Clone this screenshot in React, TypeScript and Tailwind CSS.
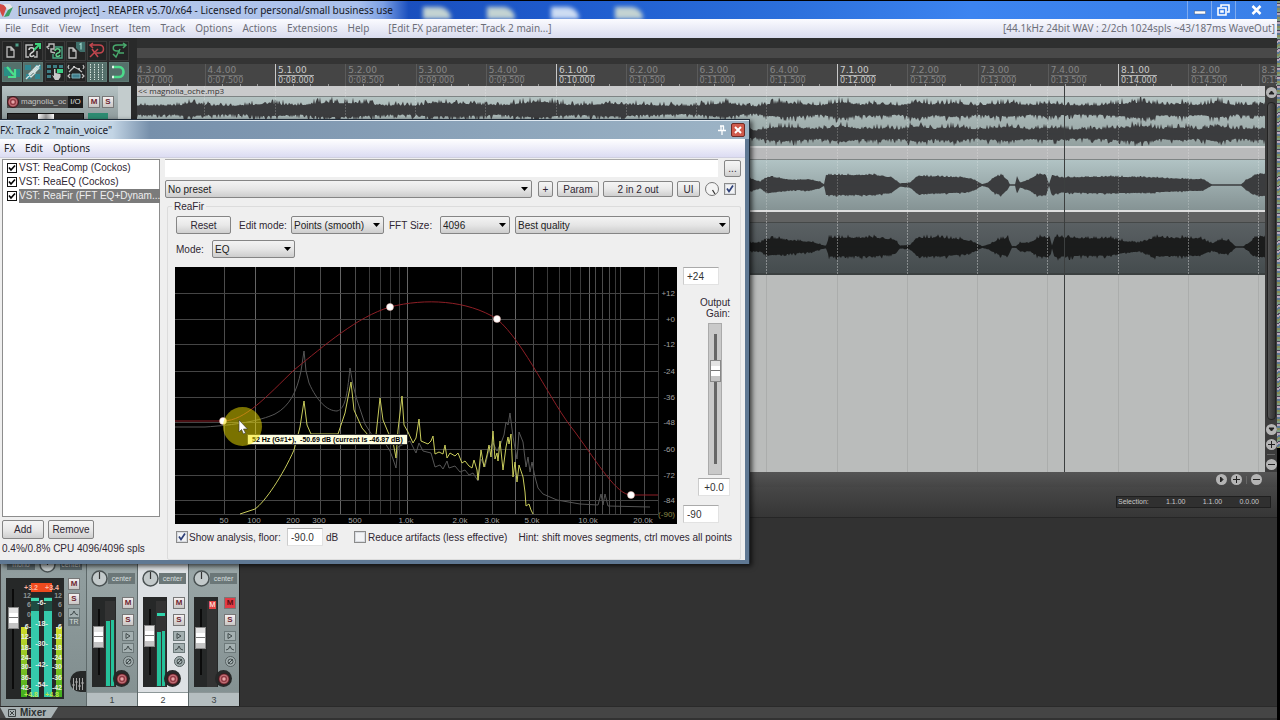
import type { ReactNode } from 'react';

const MENUS = ['File', 'Edit', 'View', 'Insert', 'Item', 'Track', 'Options', 'Actions', 'Extensions', 'Help'];

const BARS = [
  { bar: 5, times: ['0:08.000', '0:08.500', '0:09.000', '0:09.500'] },
  { bar: 6, times: ['0:10.000', '0:10.500', '0:11.000', '0:11.500'] },
  { bar: 7, times: ['0:12.000', '0:12.500', '0:13.000', '0:13.500'] },
  { bar: 8, times: ['0:14.000', '0:14.500', '0:15.000', '0:15.500'] },
];

const PLUGINS = ['VST: ReaComp (Cockos)', 'VST: ReaEQ (Cockos)', 'VST: ReaFir (FFT EQ+Dynam...'];

type Point = [number, number];

// small deterministic noise so the waveforms look the same on every render
function noise(n: number) {
  const v = Math.sin(n * 127.1 + 311.7) * 43758.5453;
  return v - Math.floor(v);
}

function envelopeAt(env: Point[], x: number) {
  for (let i = 1; i < env.length; i++) {
    if (x <= env[i][0]) {
      const [x0, y0] = env[i - 1];
      const [x1, y1] = env[i];
      return y0 + ((y1 - y0) * (x - x0)) / (x1 - x0);
    }
  }
  return env[env.length - 1][1];
}

function wavePath(env: Point[], mid: number, rough: number, seed: number) {
  const top: string[] = [];
  const bottom: string[] = [];
  for (let x = 137; x <= 1265; x += 1) {
    const e = envelopeAt(env, x);
    const up = e * (1 - rough + rough * noise(x + seed) ** 3);
    const down = e * (1 - rough + rough * noise(x * 3 + seed) ** 3);
    top.push(`${x},${(mid - up).toFixed(1)}`);
    bottom.unshift(`${x},${(mid + down).toFixed(1)}`);
  }
  return `M${top.join(' L')} L${bottom.join(' L')} Z`;
}

const MUSIC: Point[] = [
  [137, 9], [180, 9], [188, 13], [210, 9], [240, 8], [265, 12], [300, 9], [325, 14], [352, 13], [385, 9],
  [420, 9], [430, 13], [465, 12], [500, 9], [538, 15], [575, 9], [612, 12], [650, 9], [690, 8], [726, 13],
  [745, 8], [757, 7], [770, 12], [788, 13], [820, 9], [842, 15], [860, 10], [880, 11], [900, 9], [917, 15],
  [935, 10], [953, 13], [975, 9], [1010, 13], [1030, 9], [1045, 12], [1070, 9], [1100, 9], [1115, 11],
  [1143, 15], [1160, 10], [1182, 12], [1200, 9], [1218, 15], [1235, 9], [1265, 11],
];

const VOICE: Point[] = [
  [137, 6], [750, 8], [760, 4], [768, 10], [785, 7], [797, 6], [808, 7], [820, 4], [824, 1], [826, 12],
  [875, 12], [892, 9], [900, 2], [910, 3], [918, 11], [940, 10], [965, 9], [975, 6], [982, 1], [988, 3],
  [995, 10], [1002, 12], [1008, 5], [1010, 0.5], [1015, 0.5], [1017, 10], [1020, 3], [1030, 7], [1038, 13],
  [1046, 12], [1049, 1], [1052, 12], [1060, 9], [1110, 10], [1150, 9], [1190, 7], [1203, 7], [1212, 0.5],
  [1241, 0.5], [1246, 6], [1251, 9], [1258, 13], [1265, 13],
];

const VOICE_WET: Point[] = [
  [137, 6], [750, 6], [760, 6], [768, 12], [785, 10], [800, 8], [812, 7], [824, 2], [826, 2], [829, 13],
  [875, 13], [895, 10], [900, 2], [910, 3], [918, 13], [940, 13], [965, 10], [975, 6], [982, 1], [990, 4],
  [998, 10], [1008, 13], [1012, 1], [1016, 1], [1020, 6], [1030, 6], [1040, 14], [1050, 12], [1052, 2], [1055, 14],
  [1085, 12], [1110, 12], [1125, 8], [1140, 6], [1155, 13], [1200, 12], [1212, 5], [1222, 10], [1230, 8],
  [1236, 0.5], [1243, 0.5], [1250, 7], [1256, 13], [1265, 14],
];

function Wave({ env, mids, rough, height, dark }: { env: Point[]; mids: number[]; rough: number; height: number; dark?: boolean }) {
  return (
    <svg className="block h-full w-full" viewBox={`137 0 1128 ${height}`} preserveAspectRatio="none">
      {mids.map((mid, i) => (
        <g key={mid}>
          <path d={wavePath(env, mid, rough, i * 50)} fill={dark ? '#1b1c1c' : '#3b3c3e'} />
          <path d={`M137 ${mid}H1265`} stroke={dark ? '#1b1c1c' : '#3b3c3e'} strokeWidth="1" />
        </g>
      ))}
    </svg>
  );
}

/* ---------- toolbar ---------- */

function Tool({ label, on, children }: { label: string; on?: boolean; children: ReactNode }) {
  return (
    <button
      aria-label={label}
      className={`flex h-5 w-5 items-center justify-center border ${on ? 'border-[#5d7a74] bg-[#55706b]' : 'border-[#3a3a3a] bg-[#232424]'}`}
    >
      <svg width="18" height="18" viewBox="0 0 18 18" fill="none">
        {children}
      </svg>
    </button>
  );
}

function Toolbar() {
  return (
    <div className="grid w-[130px] grid-cols-6 gap-y-px pt-[3px] pl-[2px]">
      <Tool label="New project">
        <path d="M4 5h4l3 3v7H4z M8 5v3h3" stroke="#bdbdbd" strokeWidth="1.3" />
        <path d="M14 1v4M12 3h4M12.7 1.7l2.6 2.6M15.3 1.7l-2.6 2.6" stroke="#4f9f8a" />
      </Tool>
      <Tool label="Open project">
        <path d="M9 3H2v12h3M13 9v6h-3" stroke="#bdbdbd" strokeWidth="1.4" />
        <path d="M5 8c0-3 5-3 5 0s-4 2-4 5c0 2 3 2 4 0" stroke="#d0d0d0" strokeWidth="1.6" />
        <path d="M10 8l5-5M11 2h5v5" stroke="#3fd07c" strokeWidth="2" />
      </Tool>
      <Tool label="Save project">
        <path d="M9 5h7v11H7v-4" stroke="#4aa584" strokeWidth="1.4" />
        <path d="M9 9c0-3 5-3 5 0s-4 1-4 4c0 2 3 2 4 0" stroke="#5fd08b" strokeWidth="1.5" />
        <path d="M3 7L1 5l2-1V2h5v5H5v3l4 1" stroke="#bdbdbd" strokeWidth="1.4" />
      </Tool>
      <Tool label="Project settings">
        <path d="M2 6h4l3 3v7H2z M6 6v3h3" stroke="#bdbdbd" strokeWidth="1.3" />
        <path d="M9 0h9v10H13L9 6z" fill="#3f6f6b" />
        <path d="M12.5 2.5l1.5-1v6" stroke="#9fd6cb" strokeWidth="1.2" />
      </Tool>
      <Tool label="Undo">
        <path d="M2 3h9c6 0 6 8 0 8H8M5 1L2 3l3 3" stroke="#c2464e" strokeWidth="1.5" />
        <path d="M4 7l6 8M10 7l-8 8" stroke="#c2464e" strokeWidth="1.5" />
      </Tool>
      <Tool label="Redo">
        <path d="M16 3H7c-5 0-5 6 0 6h3M13 1l3 2-3 3" stroke="#48a96c" strokeWidth="1.5" />
        <path d="M10 7l-4 8-3-3M9 11h5" stroke="#48a96c" strokeWidth="1.5" />
      </Tool>
      <Tool label="Auto crossfade" on>
        <path d="M1 4h7v9H1z M11 6h6v8h-6z" fill="#2a8f86" />
        <path d="M4 4l7 8M12 6v8H5" stroke="#4be08c" strokeWidth="2.2" />
      </Tool>
      <Tool label="Item grouping" on>
        <path d="M1 2h6v5H1z M11 2h6v5h-6z M2 11h5v5H2z M11 11h5v5h-5z" fill="#2f8792" />
        <path d="M2 16L16 2M5 11l3-3 3 2-4 4zM9 7l4-4 2 2-4 4z" stroke="#d8e4e4" strokeWidth="1.3" />
      </Tool>
      <Tool label="Ripple editing">
        <path d="M1 2h4v3H1z M7 2h4v3H7z M13 2h4v3h-4z M1 7h4v3H1z M1 12h4v3H1z" fill="#3f7f86" />
        <path d="M11 6h6v4h-6z" fill="#3ccf84" />
        <path d="M8 6h1.5v4l5 1v3l-2 3H9l-3-5 2 1z" fill="#c9c9c9" />
      </Tool>
      <Tool label="Move envelopes with items">
        <path d="M2 9l5-5 4 2 4 3" stroke="#c4c4c4" strokeWidth="1.2" />
        <path d="M6 3h2v2H6z M11 5h2v2h-2z" fill="#c4c4c4" />
        <path d="M5 11h8v4H5z" fill="#3f7f8e" stroke="#79aab2" />
        <path d="M3 11l-2 2 2 2M15 11l2 2-2 2M2 2L1 4l1 2M16 2l1 2-1 2" stroke="#c4c4c4" strokeWidth="1.2" />
      </Tool>
      <Tool label="Grid" on>
        <path d="M2.5 1v16M6.5 1v16M10.5 1v16M14.5 1v16" stroke="#d5e3dd" strokeDasharray="1.5 1" />
      </Tool>
      <Tool label="Snap" on>
        <path d="M3 4h6c6 0 6 10 0 10H3" stroke="#4cdc8b" strokeWidth="2.6" />
        <path d="M3 2.7v2.6M3 12.7v2.6" stroke="#e2f6ea" strokeWidth="2" />
      </Tool>
    </div>
  );
}

/* ---------- arrange view ---------- */

function Beat({ pos, time, strong }: { pos: string; time: string; strong?: boolean }) {
  return (
    <div
      className={`relative h-[22px] border-l pl-[2px] font-['DejaVu_Sans'] whitespace-nowrap ${
        strong ? 'border-[#c8c8c8] text-[#c9c9c9]' : 'border-[#5a5a5a] text-[#858585]'
      }`}
    >
      <div className="pt-px text-[9px] leading-[10px]">{pos}</div>
      <div className={`w-fit border-t text-[8px] leading-[9px] ${strong ? 'border-[#b0b0b0]' : 'border-[#6c6c6c]'}`}>{time}</div>
      <div className="absolute bottom-0 left-0 flex h-[2px] w-full justify-evenly">
        <i className="w-px bg-[#999]" />
        <i className="w-px bg-[#999]" />
        <i className="w-px bg-[#999]" />
      </div>
    </div>
  );
}

function Ruler() {
  return (
    <div className="-ml-[3px] flex h-[22px] bg-[#454545]">
      <div className="grid w-[141px] shrink-0 grid-cols-2">
        <Beat pos="4.3.00" time="0:07.000" />
        <Beat pos="4.4.00" time="0:07.500" />
      </div>
      {BARS.map(({ bar, times }) => (
        <div key={bar} className="grid w-[281px] shrink-0 grid-cols-4">
          {times.map((time, i) => (
            <Beat key={time} pos={`${bar}.${i + 1}.00`} time={time} strong={i === 0} />
          ))}
        </div>
      ))}
    </div>
  );
}

function RoundButton({ label, d }: { label: string; d: string }) {
  return (
    <button aria-label={label} className="flex h-[11px] w-[11px] shrink-0 items-center justify-center rounded-full bg-[#b5b5b5]">
      <svg width="7" height="7" viewBox="0 0 7 7">
        <path d={d} stroke="#222" fill="#222" />
      </svg>
    </button>
  );
}

const PLUS = 'M0 3.5H7M3.5 0V7';
const MINUS = 'M0 3.5H7';

function Arrange() {
  return (
    <div className="relative flex min-w-0 flex-1 flex-col overflow-hidden">
      <div className="h-[10px] bg-[#2e2f2f]" />
      <div className="h-[10px] bg-[#494949]" />
      <div className="h-[6px] bg-[#343434]" />
      <Ruler />
      <div className="flex min-h-0 flex-1">
        <div className="relative flex-1 overflow-hidden bg-[#babcbb]">
          <div className="h-[11px] border-b border-[#7e8484] bg-[#c9cacb] pl-px font-['Open_Sans'] text-[8px] leading-[10px] text-[#333]">
            &lt;&lt; magnolia_oche.mp3
          </div>
          <div className="h-[49px] bg-linear-to-b from-[#b4c3c2] to-[#93a1a0]">
            <Wave env={MUSIC} mids={[13, 37]} rough={0.5} height={49} />
          </div>
          <div className="h-[2px] bg-[#d3d5d5]" />
          <div className="h-3 border-b border-[#7e8484] bg-[#b9babb]" />
          <div className="h-[50px] bg-linear-to-b from-[#b1c3c4] to-[#859394]">
            <Wave env={VOICE} mids={[25]} rough={0.18} height={50} />
          </div>
          <div className="h-[2px] bg-[#dedede]" />
          <div className="h-[11px] border-b border-[#454848] bg-[#616262]" />
          <div className="h-[52px] border-b-2 border-[#3b4040] bg-linear-to-b from-[#5a6063] to-[#454c4e]">
            <Wave env={VOICE_WET} mids={[24]} rough={0.3} height={50} dark />
          </div>
          {/* beat grid and edit cursor run over all items */}
          <svg className="absolute inset-0 h-full w-full" viewBox="137 86 1128 386" preserveAspectRatio="none">
            {Array.from({ length: 17 }, (_, i) => Math.round(134 + i * 70.25) + 0.5).map((x) => (
              <g key={x}>
                <path d={`M${x} 86V212`} stroke="#ffffff" strokeOpacity="0.2" strokeDasharray="2 1" />
                <path d={`M${x} 212V274`} stroke="#ffffff" strokeOpacity="0.35" strokeDasharray="2 1" />
                <path d={`M${x} 275V472`} stroke="#abadac" />
              </g>
            ))}
            <path d="M1064.5 86V472" stroke="#3c3f3f" />
          </svg>
        </div>
        <div className="flex w-3 flex-col items-center gap-1 bg-[#3c3c3c] pt-px">
          <RoundButton label="Scroll up" d="M1 5L3.5 2L6 5Z" />
          <div className="w-[9px] flex-1 rounded border border-[#222] bg-linear-to-r from-[#555] to-[#333]" />
          <RoundButton label="Scroll down" d="M1 2L3.5 5L6 2Z" />
          <RoundButton label="Zoom in vertically" d={PLUS} />
          <i className="h-px w-2 bg-[#666]" />
          <div className="pb-[2px]">
            <RoundButton label="Zoom out vertically" d={MINUS} />
          </div>
        </div>
      </div>
    </div>
  );
}

function SmallButton({ children, red, label }: { children: ReactNode; red?: boolean; label?: string }) {
  return (
    <button
      aria-label={label}
      className={`flex h-3 w-3 items-center justify-center border border-[#777] text-[8px] leading-none font-bold ${
        red ? 'bg-[#e33b45] text-[#5c0d12]' : 'bg-linear-to-b from-[#f4f0f0] to-[#c9c6c4] text-[#6d2531]'
      }`}
    >
      {children}
    </button>
  );
}

function RecordDot() {
  return (
    <svg className="shrink-0" width="12" height="12" viewBox="0 0 14 14">
      <circle cx="7" cy="7" r="6.5" fill="#913a44" stroke="#30181b" />
      <circle cx="7" cy="7" r="4.5" fill="none" stroke="#cf8388" />
      <circle cx="7" cy="7" r="2" fill="#e6a5a8" />
    </svg>
  );
}

function TrackPanel() {
  return (
    <div className="mt-1 ml-[2px] flex h-12 w-[129px] bg-[#93a0a1]">
      <div className="flex w-[116px] flex-col gap-[5px] bg-linear-to-b from-[#b5c2c3] to-[#7d8a8b] pt-[10px] pl-[5px]">
        <div className="flex items-center">
          <div className="flex h-3 w-[61px] items-center gap-[2px] bg-[#4a4a4a] text-[8px] text-[#c4c4c4]">
            <RecordDot />
            magnolia_oc
          </div>
          <button className="mr-[5px] h-3 w-[15px] bg-[#1c1c1c] text-[8px] leading-3 text-[#ddd]">I/O</button>
          <SmallButton>M</SmallButton>
          <div className="w-[2px]" />
          <SmallButton>S</SmallButton>
        </div>
        <div className="flex h-3 items-start">
          <div className="mr-1 flex h-full w-[77px] justify-center border border-[#111] bg-[#292929]">
            <div className="w-4 bg-linear-to-r from-white via-[#999] to-white" />
          </div>
          <div className="h-full w-5 bg-[#2d8b72]" />
        </div>
      </div>
      <div className="flex-1 bg-[#c3cccd]" />
    </div>
  );
}

/* ---------- FX window ---------- */

function Push({ children, className }: { children: ReactNode; className: string }) {
  return (
    <button
      className={`flex items-center justify-center rounded-[2px] border border-[#858585] bg-linear-to-b from-[#f5f5f5] via-[#e9e9e9] to-[#cfcfcf] whitespace-nowrap ${className}`}
    >
      {children}
    </button>
  );
}

function Combo({ id, value, className }: { id: string; value: string; className: string }) {
  return (
    <div className={`relative h-[18px] ${className}`}>
      <select
        id={id}
        aria-label={value}
        className="block h-full w-full appearance-none rounded-[2px] border border-[#858585] bg-linear-to-b from-[#f3f3f3] via-[#e6e6e6] to-[#cdcdcd] pl-[2px] text-[10px] text-[#222]"
      >
        <option>{value}</option>
      </select>
      <svg className="pointer-events-none absolute top-[7px] right-1" width="7" height="4" viewBox="0 0 7 4">
        <path d="M0 0H7L3.5 4Z" fill="#000" />
      </svg>
    </div>
  );
}

function Tick({ id, checked, label }: { id: string; checked?: boolean; label?: string }) {
  return (
    <span className="relative block h-3 w-3 shrink-0">
      <input
        id={id}
        type="checkbox"
        defaultChecked={checked}
        aria-label={label}
        className="peer block h-3 w-3 appearance-none border border-[#8b8b8b] bg-[#f2f3f5] shadow-[inset_0_0_0_1px_#d8dbe0]"
      />
      <svg className="pointer-events-none invisible absolute inset-0 peer-checked:visible" width="12" height="12" viewBox="0 0 12 12">
        <path d="M3 5.5L5 8.5L9 2.5" stroke="#2d3f78" strokeWidth="1.7" fill="none" />
      </svg>
    </span>
  );
}

function ListTick({ id }: { id: string }) {
  return (
    <span className="relative block h-[10px] w-[10px] shrink-0">
      <input id={id} type="checkbox" defaultChecked className="peer block h-[10px] w-[10px] appearance-none border border-[#111] bg-white" />
      <svg className="pointer-events-none invisible absolute inset-0 peer-checked:visible" width="10" height="10" viewBox="0 0 10 10">
        <path d="M2 4.5L4 7L8 2.5" stroke="#000" strokeWidth="1.6" fill="none" />
      </svg>
    </span>
  );
}

const H_LINES: [number, string][] = [
  [26, '+12'], [52, '+0'], [77, '-12'], [104, '-24'], [130, '-36'], [155, '-48'], [182, '-60'], [208, '-72'], [233, '-84'], [247, '(-90)'],
];

// x position and index into LINE_SHADES
const V_LINES: Point[] = [
  [49, 1], [80, 2], [119, 1], [145, 1], [165, 2], [180, 1], [194, 0], [205, 0], [215, 0], [224, 0], [232, 2], [286, 1],
  [317, 1], [340, 2], [358, 1], [372, 0], [384, 0], [395, 0], [405, 0], [414, 2], [420, 1], [427, 1], [434, 1], [440, 0],
  [445, 1], [469, 1], [483, 0],
];
const LINE_SHADES = ['#3a3a3a', '#4c4c4c', '#656565'];

const FREQS: [number, string][] = [
  [49, '50'], [79, '100'], [118, '200'], [144, '300'], [180, '500'], [231, '1.0k'], [285, '2.0k'], [317, '3.0k'],
  [357, '5.0k'], [413, '10.0k'], [468, '20.0k'],
];

const NODES: Point[] = [[48, 154], [215, 40], [322, 52], [456, 228]];

const INPUT_SPECTRUM =
  'M0 160H30C60 158 85 154 100 147C115 139 122 124 126 104L129 84L131 104L134 116C142 134 152 144 162 144C170 142 172 130 175 101' +
  'L178 118L182 133L190 157L197 168L210 176L215 184L218 192L221 201L223 180L235 174L241 186L244 176L248 184L256 186L260 200' +
  'L265 198L268 202L272 194L274 201L280 199L285 205L290 203L294 208L298 206L303 214L306 192L310 200L314 182L318 176L322 184' +
  'L326 176L329 168L331 155L333 158L335 146L338 170L342 192L344 165L348 175L351 200L353 190L355 205L357 195L360 210L363 221' +
  'L368 227L382 233L405 237L423 238L426 227L428 238L430 227L433 239L475 240';

const OUTPUT_SPECTRUM =
  'M65 247L80 242C90 235 108 208 119 183L125 160L129 134L132 158L136 167H163L170 146L176 115L179 143L187 161L193 168H201L205 131' +
  'L208 153L213 165L218 175L221 191L223 163L227 129L229 158L233 165L238 176L241 171L244 152L246 174L253 177L256 174L258 169' +
  'L260 187L264 185L268 187L270 178L272 191L275 186L280 189L283 186L287 196L290 194L294 199L297 201L299 193L302 203L303 213' +
  'L306 183L309 200L312 188L314 178L316 190L318 164L320 192L322 186L323 194L325 174L328 203L331 180L333 170L334 177L336 167' +
  'L338 210L340 195L342 215L344 198L346 204L348 210L350 225L351 239L354 237L356 243L358 247';

function Spectrum() {
  return (
    <svg className="block shrink-0 bg-black font-['Liberation_Sans']" width="502" height="257" viewBox="0 0 502 257">
      {V_LINES.map(([x, shade]) => (
        <path key={x} d={`M${x + 0.5} 0V247`} stroke={LINE_SHADES[shade]} />
      ))}
      {H_LINES.map(([y, label]) => (
        <g key={y}>
          <path d={`M0 ${y}.5H483`} stroke="#454545" />
          <text x="500" y={y + 3} textAnchor="end" fontSize="8" fill={label === '(-90)' ? '#8d8a4a' : '#a0a0a0'}>
            {label}
          </text>
        </g>
      ))}
      {FREQS.map(([x, label]) => (
        <text key={label} x={x} y="256" textAnchor="middle" fontSize="8" fill="#a0a0a0">
          {label}
        </text>
      ))}
      <path d={INPUT_SPECTRUM} fill="none" stroke="#565656" />
      <path d={OUTPUT_SPECTRUM} fill="none" stroke="#c9cc5c" />
      <path
        d="M0 154H48C70 154 92 129 119 103C150 78 182 50 215 40C250 31 292 33 322 52C350 76 376 136 400 165C424 198 442 228 456 228H483"
        fill="none"
        stroke="#8e1f26"
      />
      {NODES.map(([x, y]) => (
        <circle key={x} cx={x} cy={y} r="3.5" fill="#fff" stroke="#e8b0a8" strokeWidth="0.5" />
      ))}
    </svg>
  );
}

function Fader({ label, value, className }: { label: string; value: number; className: string }) {
  return (
    <input
      type="range"
      aria-label={label}
      defaultValue={value}
      className={`block appearance-none bg-center bg-no-repeat [direction:rtl] [writing-mode:vertical-lr] [&::-webkit-slider-thumb]:h-[22px] [&::-webkit-slider-thumb]:w-[11px] [&::-webkit-slider-thumb]:appearance-none [&::-webkit-slider-thumb]:border [&::-webkit-slider-thumb]:border-[#888] [&::-webkit-slider-thumb]:bg-[linear-gradient(#e4e4e4_0_25%,#fff_25%_45%,#777_45%_52%,#fff_52%_75%,#c4c4c4_75%)] ${className}`}
    />
  );
}

const FIELD = 'border border-[#e2e2e2] border-t-[#aaa] border-l-[#ccc] bg-white px-[3px] text-[10px] text-[#333]';

function FxWindow() {
  return (
    <section className="absolute top-[118px] left-0 flex w-[750px] flex-col border-t border-r border-[#1f2b38] bg-[#5f7893] pr-1 pb-1 font-['Liberation_Sans'] text-[10px] text-[#2f2733] shadow-[2px_2px_5px_rgba(0,0,0,0.7)]">
      <header className="-mr-1 flex h-[19px] items-center border-t border-[#dfe9f2] bg-linear-to-r from-[#c3d5e5] from-15% via-[#7790ab] via-20% to-[#9db4c6] font-['Noto_Sans'] text-[#1c222b]">
        <h2 className="flex-1 text-[10px] leading-[16px]">FX: Track 2 "main_voice"</h2>
        <svg className="mr-1" width="10" height="10" viewBox="0 0 10 10">
          <path d="M3 1h4M4 1v4M6.5 1v4M1 5.5h8M5 6v4" stroke="#fff" strokeWidth="1.3" />
        </svg>
        <button aria-label="Close" className="mr-1 flex h-[14px] w-[14px] items-center justify-center rounded-[2px] border border-[#6d2b26] bg-[#cf5a4c]">
          <svg width="8" height="8" viewBox="0 0 8 8">
            <path d="M1 1l6 6M7 1L1 7" stroke="#fff" strokeWidth="2" />
          </svg>
        </button>
      </header>
      <nav className="flex h-[19px] items-center gap-[10px] border-b border-[#d0d0e0] bg-linear-to-b from-white to-[#dcdcf2] pl-1 font-['Noto_Sans'] text-[10px] text-[#222]">
        <button>FX</button>
        <button>Edit</button>
        <button>Options</button>
      </nav>
      <div className="flex bg-[#efefef]">
        <div className="w-[160px] pt-px pl-[2px]">
          <ul className="h-[358px] border border-[#8d8d8d] bg-white pt-px pl-1">
            {PLUGINS.map((name, i) => (
              <li key={name} className="flex h-[14px] items-center gap-[2px]">
                <ListTick id={`fx-${i}`} />
                <label htmlFor={`fx-${i}`} className={`flex-1 leading-[14px] whitespace-nowrap ${i === 2 ? 'bg-[#7b7b7b] text-[#eee]' : ''}`}>
                  {name}
                </label>
              </li>
            ))}
          </ul>
          <div className="mt-[3px] flex gap-1">
            <Push className="h-[19px] w-[42px]">Add</Push>
            <Push className="h-[19px] w-[46px]">Remove</Push>
          </div>
          <p className="mt-[2px] text-[10px] whitespace-nowrap">0.4%/0.8% CPU 4096/4096 spls</p>
        </div>
        <div className="min-w-0 flex-1 pt-px pr-1 pl-[5px]">
          <div className="flex items-center gap-[6px]">
            <input aria-label="Comment" className="h-[18px] min-w-0 flex-1 border-t border-[#aaa] bg-white" />
            <Push className="h-[17px] w-[17px]">...</Push>
          </div>
          <div className="mt-[3px] flex items-center gap-1 pr-[5px]">
            <Combo id="preset" value="No preset" className="flex-1" />
            <Push className="ml-[2px] h-4 w-[15px]">+</Push>
            <Push className="h-4 w-[42px]">Param</Push>
            <Push className="h-4 w-[70px]">2 in 2 out</Push>
            <Push className="h-4 w-[23px]">UI</Push>
            <svg className="mx-px" width="14" height="14" viewBox="0 0 14 14">
              <circle cx="7" cy="7" r="6.5" fill="#f4f4f4" stroke="#777" />
              <path d="M7.5 8L10 12" stroke="#333" strokeWidth="1.3" />
            </svg>
            <Tick id="enabled" checked label="Enable plug-in" />
          </div>
          <fieldset className="mt-[3px] ml-[2px] rounded-[2px] border border-[#dcdcdc] pb-[13px] pl-2">
            <legend className="-ml-1 px-[2px] leading-[11px]">ReaFir</legend>
            <div className="mt-1 flex items-center">
              <Push className="mr-2 h-[18px] w-[55px]">Reset</Push>
              <label htmlFor="edit-mode" className="w-[52px] whitespace-nowrap">Edit mode:</label>
              <Combo id="edit-mode" value="Points (smooth)" className="w-[93px]" />
              <label htmlFor="fft-size" className="ml-[5px] w-[51px] whitespace-nowrap">FFT Size:</label>
              <Combo id="fft-size" value="4096" className="w-[70px]" />
              <Combo id="quality" value="Best quality" className="ml-[5px] w-[215px]" />
            </div>
            <div className="mt-[6px] flex items-center">
              <label htmlFor="mode" className="w-9">Mode:</label>
              <Combo id="mode" value="EQ" className="w-[83px]" />
            </div>
            <div className="mt-[9px] -ml-px flex">
              <div className="relative">
                <Spectrum />
                <div className="absolute top-[167px] left-[72px] border border-[#333] bg-[#ffffe1] px-1 text-[7px] leading-[9px] font-bold whitespace-pre text-black">
                  52 Hz (G#1+),  -50.69 dB (current is -46.87 dB)
                </div>
                <div className="absolute top-[140px] left-12 h-[39px] w-[39px] rounded-full bg-[#f4e400]/50" />
                <svg className="absolute top-[153px] left-[63px]" width="10" height="15" viewBox="0 0 10 15">
                  <path d="M1 0V12L3.5 9.5L5.5 14L7.5 13L5.5 9H9.5Z" fill="#fff" stroke="#333" strokeWidth="0.6" />
                </svg>
              </div>
              <div className="flex flex-1 flex-col pl-[6px]">
                <input aria-label="Ceiling" defaultValue="+24" className={`h-[18px] w-9 ${FIELD}`} />
                <div className="mt-3 flex flex-col items-end pr-[10px]">
                  <label htmlFor="gain-text" className="text-right leading-[11px]">
                    Output
                    <br />
                    Gain:
                  </label>
                  <div className="mt-1 mr-2">
                    <Fader
                      label="Output gain"
                      value={72}
                      className="h-[152px] w-[14px] border border-[#aaa] bg-[#c9c9c9] bg-[linear-gradient(#666,#666)] bg-[length:3px_130px]"
                    />
                  </div>
                  <input id="gain-text" defaultValue="+0.0" className={`mt-[3px] h-[18px] w-8 text-center ${FIELD}`} />
                </div>
                <input aria-label="Floor" defaultValue="-90" className={`mt-[9px] h-[18px] w-9 ${FIELD}`} />
              </div>
            </div>
            <div className="mt-1 flex h-[18px] items-center pr-[8px] whitespace-nowrap">
              <Tick id="analysis" checked />
              <label htmlFor="analysis" className="w-[99px] pl-px">Show analysis, floor:</label>
              <input aria-label="Analysis floor" defaultValue="-90.0" className={`h-[18px] w-9 ${FIELD}`} />
              <span className="w-[31px] pl-[3px]">dB</span>
              <Tick id="artifacts" />
              <label htmlFor="artifacts" className="flex-1 pl-[2px]">Reduce artifacts (less effective)</label>
              <span>Hint: shift moves segments, ctrl moves all points</span>
            </div>
          </fieldset>
        </div>
      </div>
    </section>
  );
}

/* ---------- mixer ---------- */

function IconButton({ label, d }: { label: string; d: string }) {
  return (
    <button aria-label={label} className="flex h-[10px] w-3 items-center justify-center border border-[#6d797a] bg-[#a4b0b1]">
      <svg width="8" height="6" viewBox="0 0 8 6" fill="none">
        <path d={d} stroke="#404a4b" />
      </svg>
    </button>
  );
}

function PanKnob() {
  return (
    <svg className="shrink-0" width="17" height="17" viewBox="0 0 17 17">
      <circle cx="8.5" cy="8.5" r="7.5" fill="#c3cacb" stroke="#4a5253" strokeWidth="1.5" />
      <path d="M8.5 2V9" stroke="#333" strokeWidth="1.2" />
    </svg>
  );
}

const ENV = 'M0 5L2.5 4L4 1L5.5 4L8 5';

type StripProps = { index: number; fader: number; level: number; selected?: boolean; muted?: boolean };

function Strip({ index, fader, level, selected, muted }: StripProps) {
  return (
    <div className={`flex h-full w-[51px] flex-col border-l border-[#5e696a] ${selected ? 'bg-[#dde1e4]' : 'bg-linear-to-b from-[#a3afb0] to-[#828f90]'}`}>
      <div className="mt-[52px] flex items-center pl-1">
        <PanKnob />
        <div className="h-[11px] w-[27px] bg-[#6b7778] text-center text-[7px] leading-[11px] text-[#d7dfdf]">center</div>
      </div>
      <div className="relative mt-[10px] flex gap-[6px] pl-[5px]">
        <div className="flex h-[90px] w-6 items-end bg-[#262828]">
          <Fader
            label={`Track ${index} volume`}
            value={fader}
            className="h-[90px] w-[13px] bg-[linear-gradient(#0b0b0b,#0b0b0b)] bg-[length:2px_66px]"
          />
          <div className="relative flex h-[86px] w-[10px] items-end gap-px bg-[#333] px-px pb-px">
            {muted ? (
              <span className="absolute top-0 right-px h-2 w-[7px] bg-[#e04545] text-center text-[7px] leading-2 text-white">M</span>
            ) : (
              <>
                <i className="flex-1 bg-[#25c19a]" style={{ height: level }} />
                <i className="flex-1 bg-[#25c19a]" style={{ height: level + 1 }} />
              </>
            )}
            {selected && <i className="absolute top-3 right-px h-[3px] w-2 bg-[#2fd3ab]" />}
          </div>
        </div>
        <div className="flex flex-col items-center gap-[2px]">
          <SmallButton red={muted}>M</SmallButton>
          <div className="h-px" />
          <SmallButton>S</SmallButton>
          <div className="h-px" />
          <IconButton label="Route" d="M2 0.5L6 3L2 5.5Z" />
          <IconButton label="Envelope" d={ENV} />
          <button aria-label="Phase" className="mt-px flex h-[11px] w-[11px] items-center justify-center rounded-full border border-[#555f60] bg-[#a4b0b1]">
            <svg width="7" height="7" viewBox="0 0 7 7" fill="none">
              <circle cx="3.5" cy="3.5" r="2.5" stroke="#404a4b" />
              <path d="M1 6L6 1" stroke="#404a4b" />
            </svg>
          </button>
        </div>
        <button aria-label="Record arm" className="absolute bottom-0 left-[26px] flex h-[17px] w-[17px] items-center justify-center rounded-full bg-[#262828]">
          <RecordDot />
        </button>
      </div>
      <div className={`mt-auto h-[14px] border-t border-[#8d9798] text-center text-[9px] leading-[14px] text-[#3c4344] ${selected ? 'bg-white' : 'bg-[#b5bec0]'}`}>
        {index}
      </div>
    </div>
  );
}

const DB_SIDE: [number, string][] = [
  [17, '12'], [26, '6'], [36, '0'], [48, '6-'], [58, '12-'], [69, '18-'], [79, '24-'], [88, '30-'], [99, '36-'], [109, '42-'],
];
const DB_MID: [number, string][] = [[24, '-6-'], [45, '-18-'], [65, '-30-'], [86, '-42-'], [106, '-54-']];

function MasterMeter() {
  return (
    <svg width="43" height="121" viewBox="0 0 43 121" className="font-['Liberation_Sans'] font-bold">
      <rect x="11" y="5" width="21" height="9" fill="#ef4a1e" />
      <rect x="11" y="19" width="8" height="100" fill="#1f4b42" />
      <rect x="24" y="19" width="8" height="100" fill="#1f4b42" />
      <rect x="11" y="20" width="8" height="3" fill="#40d8ae" />
      <rect x="24" y="20" width="8" height="3" fill="#40d8ae" />
      <rect x="11" y="33" width="8" height="86" fill="#35c9ab" />
      <rect x="24" y="33" width="8" height="86" fill="#35c9ab" />
      <rect x="1" y="49" width="6" height="70" fill="url(#lvl)" />
      <rect x="36" y="49" width="6" height="70" fill="url(#lvl)" />
      <defs>
        <linearGradient id="lvl" x1="0" y1="0" x2="0" y2="1">
          <stop offset="0" stopColor="#d3dc2c" />
          <stop offset="1" stopColor="#3fae1e" />
        </linearGradient>
      </defs>
      <g fontSize="7">
        {DB_SIDE.map(([y, label]) => (
          <g key={y} fill={y < 40 ? '#8f9696' : '#e8efe8'}>
            <text x="11" y={y + 3} textAnchor="end">{label}</text>
            <text x="42" y={y + 3} textAnchor="end">{label.endsWith('-') ? `-${label.slice(0, -1)}` : label}</text>
          </g>
        ))}
        {DB_MID.map(([y, label]) => (
          <text key={y} x="21.5" y={y + 3} textAnchor="middle" fill="#e8efe8">{label}</text>
        ))}
        <text x="11" y="12" textAnchor="middle" fill="#ffb5a0">+3.2</text>
        <text x="32" y="12" textAnchor="middle" fill="#ffb5a0">+3.4</text>
        <text x="11" y="119" textAnchor="middle" fill="#b9e84c">+4.8</text>
        <text x="32" y="119" textAnchor="middle" fill="#b9e84c">+4.8</text>
      </g>
    </svg>
  );
}

function Master() {
  return (
    <div className="relative flex h-full w-[86px] flex-col border-l border-[#444] bg-linear-to-b from-[#98a5a6] to-[#7f8c8d]">
      <div className="mt-[38px] flex h-[17px] items-center gap-1 pl-[6px]">
        <div className="h-[11px] w-[28px] bg-[#59666a] text-center text-[7px] leading-[11px] text-[#ccc]">mono</div>
        <PanKnob />
        <div className="h-[11px] w-[22px] bg-[#59666a] text-center text-[7px] leading-[11px] text-[#ccc]">center</div>
      </div>
      <div className="mt-[5px] flex gap-1 pl-[5px]">
        <div className="flex h-[121px] w-[58px] bg-[#262828]">
          <Fader
            label="Master volume"
            value={71}
            className="h-[121px] w-[14px] bg-[linear-gradient(#0b0b0b,#0b0b0b)] bg-[length:2px_100px]"
          />
          <MasterMeter />
        </div>
        <div className="flex flex-col gap-[3px]">
          <SmallButton>M</SmallButton>
          <SmallButton>S</SmallButton>
          <div>
            <IconButton label="Envelope" d={ENV} />
            <div className="h-2 w-3 bg-[#6b7778] text-center text-[7px] leading-2 text-[#d7dfdf]">TR</div>
          </div>
        </div>
      </div>
      <div className="absolute right-0 bottom-[14px] flex h-[21px] w-4 items-end justify-center rounded-l-full bg-[#262828] pb-[2px]">
        <svg width="12" height="12" viewBox="0 0 12 12">
          <path d="M1.5 0V12M4.5 0V12M7.5 0V12M10.5 0V12M0 7h3M3 4h3M6 8h3M9 5h3" stroke="#a5a5a5" />
        </svg>
      </div>
    </div>
  );
}

export default function App() {
  return (
    <div className="flex min-h-screen overflow-hidden bg-black pt-px font-['Liberation_Sans']">
      <main className="relative flex min-w-0 flex-1 flex-col bg-[#323232]">
        <header className="flex h-[18px] items-center overflow-hidden bg-[linear-gradient(90deg,#bccbe8_0,#a9c0ec_28%,#7ca0e4_30%,#1a4fbe_32%,#1f5cce_45%,#2c70dc_62%,#3c84f0_76%,#3a80e8_100%)] font-['Noto_Sans'] text-[10px] text-[#15181f]">
          <svg className="mr-1" width="14" height="15" viewBox="0 0 14 15">
            <path d="M0 1L7 3L3 14C0 10-1 5 0 1Z" fill="#d24a44" />
            <path d="M3 1H10L13 5L8 7Z" fill="#e8e8e8" />
            <path d="M13 4L9 13L4 14L8 7Z" fill="#3c9f63" />
          </svg>
          <h1 className="whitespace-nowrap">[unsaved project] - REAPER v5.70/x64 - Licensed for personal/small business use</h1>
          <div className="ml-[30px] flex h-full flex-1 items-end gap-9 blur-[2px]">
            <i className="h-3 w-7 rounded-tr-full bg-[#c3d3d2]" />
            <i className="h-3 w-7 rounded-tr-full bg-[#c3d3d2]" />
            <i className="h-3 w-7 rounded-tr-full bg-[#cddcf2]" />
            <i className="h-3 w-7 rounded-tr-full bg-[#c3d3d2]" />
          </div>
          <div className="flex h-full">
            <button aria-label="Minimize" className="flex w-6 items-center justify-center border-l border-[#7fabee]">
              <svg width="12" height="10" viewBox="0 0 12 10">
                <rect x="0.5" y="6" width="11" height="3" fill="#fff" stroke="#4d5f7e" strokeWidth="0.5" />
              </svg>
            </button>
            <button aria-label="Restore" className="flex w-6 items-center justify-center border-l border-[#7fabee]">
              <svg width="13" height="12" viewBox="0 0 13 12" fill="none" stroke="#fff" strokeWidth="1.6">
                <path d="M4 3V1h8v7h-2M1 4h8v7H1z M4 7h2v1H4z" />
              </svg>
            </button>
            <button aria-label="Close" className="flex w-[42px] items-center justify-center border-l border-[#7fabee]">
              <svg width="11" height="10" viewBox="0 0 11 10">
                <path d="M1.5 1l8 8M9.5 1l-8 8" stroke="#fff" strokeWidth="2.5" />
              </svg>
            </button>
          </div>
        </header>
        <nav className="flex h-[19px] items-center gap-[10px] bg-linear-to-b from-[#fbfbff] to-[#d9dcee] pl-[5px] font-['Noto_Sans'] text-[10px] whitespace-nowrap text-[#6c6e78]">
          {MENUS.map((name) => (
            <button key={name}>{name}</button>
          ))}
          <span className="ml-[9px]">[Edit FX parameter: Track 2 main...]</span>
          <span className="ml-auto pr-[2px]">[44.1kHz 24bit WAV : 2/2ch 1024spls ~43/187ms WaveOut]</span>
        </nav>
        <div className="flex h-[434px]">
          <div className="w-[137px] shrink-0 bg-[#292a2a]">
            <Toolbar />
            <TrackPanel />
          </div>
          <Arrange />
        </div>
        <div className="flex h-[15px] items-center justify-end gap-1 bg-linear-to-b from-[#555] to-[#454545] pr-[15px]">
          <RoundButton label="Scroll right" d="M2.5 1L5 3.5L2.5 6Z" />
          <RoundButton label="Zoom in" d={PLUS} />
          <i className="h-2 w-px bg-[#666]" />
          <RoundButton label="Zoom out" d={MINUS} />
        </div>
        <div className="flex h-[31px] items-center justify-end border-b border-[#262626] bg-linear-to-b from-[#474747] to-[#363636] pr-[6px]">
          <div className="flex h-3 w-[155px] items-center justify-between border border-[#1f1f1f] bg-[#303030] pr-[11px] pl-px text-[7px] text-[#c9c9c9]">
            <span>Selection:</span>
            <span>1.1.00</span>
            <span>1.1.00</span>
            <span>0.0.00</span>
          </div>
        </div>
        <div className="flex h-[188px]">
          <Master />
          <Strip index={1} fader={57} level={65} />
          <Strip index={2} fader={59} level={54} selected />
          <Strip index={3} fader={56} level={0} muted />
          <div className="border-l border-[#1e1e1e]" />
        </div>
        <div className="flex h-3 border-t border-[#2a2a2a] bg-[#454545]">
          <div className="flex h-full w-[58px] items-center gap-1 bg-[#a9b2b4] pl-2 text-[10px] font-bold text-[#2c3132] [clip-path:polygon(0_0,100%_0,88%_100%,10%_100%)]">
            <svg width="8" height="8" viewBox="0 0 8 8" fill="none" stroke="#3b4142">
              <path d="M0.5 0.5h7v7h-7zM2 2l4 4M6 2L2 6" />
            </svg>
            Mixer
          </div>
        </div>
        <FxWindow />
      </main>
      <div className="h-[447px] w-[3px] bg-[repeating-linear-gradient(170deg,#7d9f86_0_2px,#4d4458_2px_3px,#b9a8b8_3px_5px,#5c7a95_5px_7px,#8a8f5a_7px_9px)]" />
    </div>
  );
}
